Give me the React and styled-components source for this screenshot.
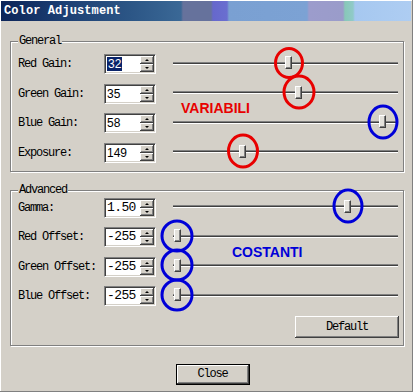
import React from 'react'
import styled, { createGlobalStyle } from 'styled-components'

const GlobalStyle = createGlobalStyle`
  html, body { margin: 0; padding: 0; background: #d4d0c8; }
  body { font-family: "Liberation Mono", monospace; }
`

const FACE = '#d4d0c8'
const RED = '#e80000'
const BLUE = '#0000d8'

const Window = styled.div`
  position: relative;
  width: 413px;
  height: 392px;
  box-sizing: border-box;
  padding: 1px 2px 0 1px;
  background: ${FACE};
  box-shadow: inset -1px -1px #808080, inset 1px 1px #ffffff;
  display: flex;
  flex-direction: column;
  overflow: hidden;
`

const TitleBar = styled.div`
  height: 20px;
  box-sizing: border-box;
  padding: 1px 0 0 3px;
  line-height: 19px;
  color: #fff;
  font-weight: bold;
  font-size: 12px;
  letter-spacing: 0.1px;
  background: linear-gradient(90deg,
    #0c2458 0px, #1c3e72 60px, #2c5686 130px, #3a6896 180px,
    #66729c 182px, #66729c 210px,
    #6668cc 212px, #6a6ed0 226px,
    #7aa0d2 228px, #7ca2d4 306px,
    #9c9ccc 308px, #9a9cca 342px,
    #88c8b8 344px, #90cac8 352px,
    #a6c8f0 354px, #aecdf2 100%);
`

const Content = styled.div`
  padding: 14px 0 0 9px;
  display: flex;
  flex-direction: column;
`

const Group = styled.fieldset`
  margin: ${p => p.$mt || 0}px 0 0 0;
  width: 394px;
  box-sizing: border-box;
  padding: ${p => p.$pt}px 2px ${p => p.$pb}px 7px;
  border: 1px solid #808080;
  box-shadow: inset 1px 1px #ffffff, 1px 1px 0 #ffffff;
  min-inline-size: 0;
  display: flex;
  flex-direction: column;
  gap: 7.5px;
`

const Legend = styled.legend`
  padding: 0 1px;
  font-size: 12px;
  letter-spacing: -1.2px;
  line-height: 13px;
  background: ${FACE};
  color: #000;
`

const Row = styled.div`
  display: grid;
  grid-template-columns: 86px 52px 1fr;
  height: 22px;
  align-items: center;
`

const Label = styled.span`
  font-size: 12px;
  letter-spacing: -1.2px;
  color: #000;
  white-space: nowrap;
`

const SpinBox = styled.div`
  display: flex;
  width: 52px;
  height: 20px;
  box-sizing: border-box;
  background: #fff;
  border: 1px solid;
  border-color: #808080 #ffffff #ffffff #808080;
  box-shadow: inset 1px 1px #404040, inset -1px -1px ${FACE};
  padding: 1px 1px 1px 2px;
`

const Field = styled.div`
  flex: 1;
  display: flex;
  align-items: center;
  font-family: ${p => (p.$mono ? '"Liberation Mono", monospace' : '"Liberation Sans", Arial, sans-serif')};
  font-size: ${p => (p.$mono ? 13 : 12)}px;
  letter-spacing: ${p => (p.$mono ? '-0.6px' : '0')};
  color: #000;
`

const Value = styled.span`
  line-height: 14px;
  padding: 0 ${p => (p.$selected ? 1 : 0)}px;
  background: ${p => (p.$selected ? '#0a246a' : 'transparent')};
  color: ${p => (p.$selected ? '#fff' : '#000')};
`

const Arrows = styled.div`
  display: flex;
  flex-direction: column;
  width: 14px;
`

const ArrowBtn = styled.div`
  flex: 1;
  display: flex;
  align-items: center;
  justify-content: center;
  background: ${FACE};
  box-shadow: inset -1px -1px #404040, inset 1px 1px #ffffff, inset -2px -2px #808080;
  &::after {
    content: '';
    width: 0;
    height: 0;
    border-left: 2px solid transparent;
    border-right: 2px solid transparent;
    ${p => (p.$down ? 'border-top: 2px solid #000;' : 'border-bottom: 2px solid #000;')}
  }
`

const Slider = styled.div`
  position: relative;
  height: 22px;
  margin-left: 14px;
  box-sizing: border-box;
  padding: 0 3px 2px 3px;
  display: flex;
  align-items: center;
`

const Track = styled.div`
  flex: 1;
  height: 1px;
  border-top: 1px solid #808080;
  border-bottom: 1px solid #ffffff;
  background: #404040;
`

const Thumb = styled.div`
  position: absolute;
  top: 3px;
  width: 7px;
  height: 13px;
  box-sizing: border-box;
  background: #e4e2dc;
  border-left: 1px solid #ffffff;
  border-top: 1px solid #ffffff;
  border-right: 1px solid #404040;
  border-bottom: 1px solid #404040;
  box-shadow: inset -1px -1px #808080;
`

const Ring = styled.div`
  position: absolute;
  left: 50%;
  top: 50%;
  width: ${p => p.$w}px;
  height: ${p => p.$h}px;
  box-sizing: border-box;
  transform: translate(-50%, -50%);
  border: 3px solid ${p => p.$color};
  border-radius: 50%;
  pointer-events: none;
`

const Footer = styled.div`
  display: flex;
  justify-content: ${p => p.$align};
  padding: ${p => p.$pad};
  margin-top: ${p => p.$mt}px;
`

const Button = styled.button`
  width: ${p => p.$w}px;
  height: ${p => p.$h}px;
  margin: 0;
  padding: 0;
  background: ${FACE};
  font-family: "Liberation Mono", monospace;
  font-size: 12px;
  letter-spacing: -1.2px;
  color: #000;
  border: ${p => (p.$default ? '1px solid #000' : 'none')};
  box-shadow: inset -1px -1px #404040, inset 1px 1px #ffffff, inset -2px -2px #808080;
`

const Note = styled.div`
  position: absolute;
  left: ${p => p.$x}px;
  top: ${p => p.$y}px;
  font-family: "Liberation Sans", Arial, sans-serif;
  font-weight: bold;
  font-size: 14px;
  line-height: 16px;
  color: ${p => p.$color};
`

const general = [
  { label: 'Red Gain:', value: '32', selected: true, pos: 0.516, ring: RED, rw: 30, rh: 32 },
  { label: 'Green Gain:', value: '35', pos: 0.561, ring: RED, rw: 33, rh: 35 },
  { label: 'Blue Gain:', value: '58', pos: 0.948, ring: BLUE, rw: 31, rh: 35 },
  { label: 'Exposure:', value: '149', pos: 0.304, ring: RED, rw: 32, rh: 35 },
]

const advanced = [
  { label: 'Gamma:', value: '1.50', pos: 0.788, ring: BLUE, rw: 31, rh: 35, mono: true },
  { label: 'Red Offset:', value: '-255', pos: 0, ring: BLUE, rw: 33, rh: 33, mono: true },
  { label: 'Green Offset:', value: '-255', pos: 0, ring: BLUE, rw: 33, rh: 33, mono: true },
  { label: 'Blue Offset:', value: '-255', pos: 0, ring: BLUE, rw: 33, rh: 33, mono: true },
]

const ControlRow = ({ item }) => (
  <Row>
    <Label>{item.label}</Label>
    <SpinBox>
      <Field $mono={item.mono}>
        <Value $selected={item.selected}>{item.value}</Value>
      </Field>
      <Arrows>
        <ArrowBtn />
        <ArrowBtn $down />
      </Arrows>
    </SpinBox>
    <Slider>
      <Track />
      <Thumb style={{ left: 3.5 + item.pos * 217 }}>
        {item.ring && <Ring $color={item.ring} $w={item.rw} $h={item.rh} />}
      </Thumb>
    </Slider>
  </Row>
)

const App = () => {
  return (
    <>
      <GlobalStyle />
      <Window>
        <TitleBar>Color Adjustment</TitleBar>
        <Content>
          <Group $pt={5} $pb={7}>
            <Legend>General</Legend>
            {general.map(g => <ControlRow key={g.label} item={g} />)}
          </Group>
          <Group $mt={12} $pt={0} $pb={7}>
            <Legend>Advanced</Legend>
            {advanced.map(a => <ControlRow key={a.label} item={a} />)}
            <Footer $align="flex-end" $pad="0 2px 0 0" $mt={1}>
              <Button $w={104} $h={22}>Default</Button>
            </Footer>
          </Group>
          <Footer $align="center" $pad="0 0 0 4px" $mt={18}>
            <Button $w={74} $h={21} $default>Close</Button>
          </Footer>
        </Content>
        <Note $x={181} $y={100} $color={RED}>VARIABILI</Note>
        <Note $x={232} $y={244} $color={BLUE}>COSTANTI</Note>
      </Window>
    </>
  )
}

export default App
